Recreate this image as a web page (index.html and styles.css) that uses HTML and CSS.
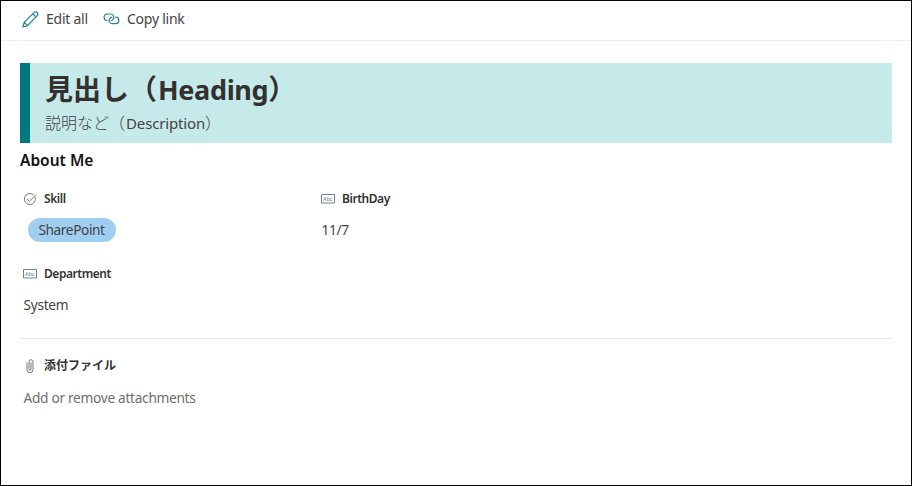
FILE: index.html
```html
<!DOCTYPE html>
<html lang="en">
<head>
<meta charset="utf-8">
<title>Item details</title>
<link rel="stylesheet" href="styles.css">
</head>
<body>
<div class="panel">
  <header class="toolbar">
    <button class="command edit">
      <svg width="17" height="17" viewBox="0 0 17 17"><path d="M1 16l1.200-4.800L12 1.600a1.900 1.900 0 0 1 3.200 3L5.500 14.700zM2.200 11.200l3.300 3.500M10.800 2.800l3.400 3.300"/></svg>
      <span>Edit all</span>
    </button>
    <button class="command copy">
      <svg width="17" height="12" viewBox="0 0 17 12"><path d="M4.600 7.600a3.300 3.300 0 0 1-.4-6.600h3.500a3.200 3.200 0 0 1 2.900 4.500C10 6.800 9 7.500 7.700 7.500M12.400 4.200a3.200 3.200 0 0 1 .4 6.500H9.300a3.200 3.200 0 0 1-2.900-4.500C7 4.900 8 4.200 9.300 4.200"/></svg>
      <span>Copy link</span>
    </button>
  </header>
  <main class="content">
    <section class="banner">
      <h1 class="heading">見出し（<span class="latin">Heading</span>）</h1>
      <p class="description">説明など（<span class="latin">Description</span>）</p>
    </section>
    <h2 class="section-title">About Me</h2>
    <div class="fields">
      <div class="field">
        <div class="label"><svg width="14" height="14" viewBox="0 0 14 14"><path d="M11.900 4.800a5.500 5.500 0 1 1-1.500-2M3.900 6.900l2.500 2.500 6.500-6.700"/></svg><span>Skill</span></div>
        <div class="value"><span class="pill">SharePoint</span></div>
      </div>
      <div class="field">
        <div class="label"><svg class="text-icon" width="14" height="14" viewBox="0 0 14 14"><path d="M.5 2.500h13v8.500H.5z"/><text x="2" y="9">Abc</text></svg><span>BirthDay</span></div>
        <div class="value">11/7</div>
      </div>
      <div class="field">
        <div class="label"><svg class="text-icon" width="14" height="14" viewBox="0 0 14 14"><path d="M.5 2.500h13v8.500H.5z"/><text x="2" y="9">Abc</text></svg><span>Department</span></div>
        <div class="value">System</div>
      </div>
    </div>
    <section class="attachments">
      <div class="label files"><svg width="14" height="14" viewBox="0 0 14 14"><path d="M4 3.500v7.200a3 3 0 0 0 6 0V2.700a2 2 0 0 0-4 0v7.500a1 1 0 0 0 2 0V3.500"/></svg><span>添付ファイル</span></div>
      <div class="value hint">Add or remove attachments</div>
    </section>
  </main>
</div>
</body>
</html>
```
FILE: styles.css
```css
* { box-sizing: border-box; }
body {
  margin: 0;
  background: #fff;
  color: #444;
  font: 14px/20px "Noto Sans", "Noto Sans CJK JP", sans-serif;
}
svg { flex: none; fill: none; stroke: #7a7977; stroke-width: 1; }
svg text { font: 5.500px "Liberation Sans", sans-serif; letter-spacing: 0; fill: #5f7485; stroke: none; }
.text-icon { stroke: #75838f; }
.panel { height: 486px; border: 1px solid #000; }
.toolbar {
  display: flex;
  height: 40px;
  padding: 8px 0 0 21px;
  border-bottom: 1px solid #eee;
}
.command {
  display: flex;
  align-items: center;
  height: 20px;
  padding: 0;
  border: 0;
  background: none;
  color: #444;
  font: inherit;
}
.command svg { stroke: #22868a; stroke-width: 1.2; }
.command span { white-space: nowrap; }
.edit { width: 81px; gap: 7px; letter-spacing: -0.250px; }
.copy { gap: 7px; letter-spacing: -0.250px; }
.copy svg { margin-top: -1px; }
.content { padding: 22px 19px 0; }
.banner {
  height: 80px;
  padding: 8px 0 0 15px;
  border-left: 10px solid #03787c;
  background: #c6e9ea;
}
.heading { margin: 0; color: #323130; font-size: 28px; font-weight: 700; line-height: 36px; }
.heading .latin { margin-left: 1px; font-size: 27px; letter-spacing: -0.350px; }
.description { margin: 5px 0 0; font-size: 16px; line-height: 20px; font-weight: 300; }
.description .latin { margin-left: 1px; font-weight: 400; font-size: 15px; letter-spacing: -0.150px; }
.section-title { margin: 6px 0 0; color: #111; font-size: 15.500px; font-weight: 600; line-height: 22px; }
.fields {
  display: grid;
  grid-template-columns: 298px 298px;
  grid-template-rows: 75px 75px;
  margin-top: 18px;
  padding-left: 3px;
}
.label {
  display: flex;
  align-items: center;
  gap: 7px;
  height: 20px;
  color: #323130;
  font-size: 12px;
  font-weight: 600;
  letter-spacing: -0.450px;
}
.label.files { letter-spacing: 0; }
.value {
  display: flex;
  align-items: center;
  height: 24px;
  margin-top: 9px;
  padding-left: 0.500px;
  font-size: 13.700px;
  letter-spacing: -0.300px;
}
.pill {
  height: 24px;
  width: 88px;
  margin-left: 4px;
  border-radius: 12px;
  background: #a0cef1;
  text-align: center;
  line-height: 24px;
  letter-spacing: -0.400px;
}
.attachments { height: 80px; padding: 16px 0 0 3px; margin-top: -1px; border-top: 1px solid #edebe9; }
.attachments .label { margin-top: 1px; }
.attachments .value { margin-top: 10px; }
.hint { color: #6e6e6e; }
```
